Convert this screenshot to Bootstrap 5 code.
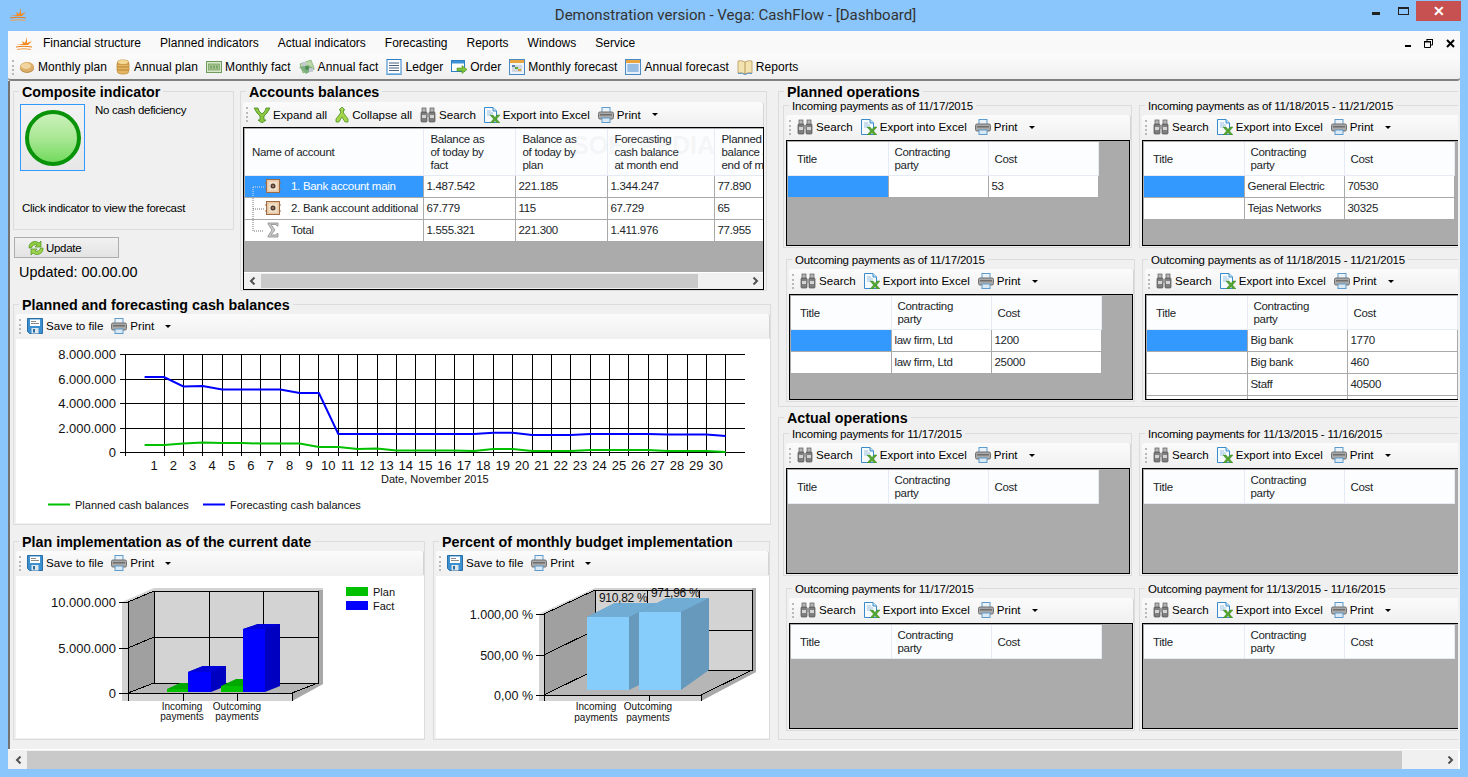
<!DOCTYPE html>
<html lang="en">
<head>
<meta charset="utf-8">
<title>Vega: CashFlow</title>
<link href="https://cdn.jsdelivr.net/npm/bootstrap@5.3.0/dist/css/bootstrap.min.css" rel="stylesheet">
<style>
html,body{margin:0;height:777px;overflow:hidden;background:#8ac5fb}
body{font:12px/14px "Liberation Sans",Arial,sans-serif;color:#000}
svg{display:block;flex:none}
.app{width:1468px;height:777px}
.titlebar{height:31px;position:relative;padding-left:10px}
.title-text{flex:1;text-align:center;font:15px/30px Roboto,sans-serif;color:#333;padding-left:72px}
.wc{display:flex;align-items:flex-start;height:21px;margin-right:7px}
.wc-min{width:8px;height:3px;background:#222;margin:12px 0 0 0}
.wc-max{width:11px;height:8px;border:1px solid #222;border-top-width:2px;margin:7px 7px 0 18px}
.wc-close{width:45px;height:20px;margin:1px 0 0 0;background:#c75050;color:#fff;text-align:center;font:bold 14px/20px "Liberation Sans",sans-serif}
.client{height:738px;margin:0 8px;background:#f0f0f0;display:flex;flex-direction:column}
.menubar{height:24px;background:#f9f9f9;padding-left:8px;gap:19px;font-size:12px;flex:none}
.menubar .logo{margin-right:-9px}
.menubar .mdi{margin-left:auto;gap:13px;padding-right:5px}
.mdi-min{width:6px;height:2px;background:#000;margin-top:6px}
.mainbar{height:26px;flex:none;background:linear-gradient(#fbfbfb,#efefef);border-bottom:2px solid #808080;padding-left:4px;border-radius:0 0 3px 3px;letter-spacing:.07px}
.grip{width:2px;height:15px;border-left:2px dotted #b9b9b9;margin-right:6px;flex:none}
.mainbar .grip{margin-right:5px}
.tool{display:flex;align-items:center;gap:3px;margin-right:8px;white-space:nowrap;flex:none}
.caret{width:0;height:0;border:3.5px solid transparent;border-top:3.5px solid #000;border-bottom:0;margin-left:1px;flex:none}
.workspace{height:668px;flex:none;border-left:2px solid #737373;padding-left:3px;margin-right:2px;overflow:hidden;position:relative}
.leftcol{width:758px;flex:none}
.rightcol{margin-left:7px;width:690px;flex:none}
.gb{border:1px solid #dcdcdc;flex:none}
.gb-t{width:fit-content;background:#f0f0f0;padding:0 3px;margin:-8px 0 0 5px;font:bold 14.3px/16px "Liberation Sans",sans-serif;white-space:nowrap}
.gs-t{width:fit-content;background:#f0f0f0;padding:0 3px;margin:-7px 0 0 5px;font-size:11.5px;line-height:14px;white-space:nowrap;letter-spacing:-.2px}
.tb{height:25px;background:linear-gradient(#fbfbfb,#f0f0f0);border-radius:3px 3px 0 0;padding-left:3px;border-right:1px solid #d4d4d4;flex:none;font-size:11.6px}
.comp{width:221px;height:139px;margin-top:10px}
.ind{width:65px;height:67px;padding:0;border:1px solid #3399ff;border-radius:0;background:linear-gradient(#f3f3f3,#e7e7e7);margin:4px 0 0 6px;display:flex;align-items:center;justify-content:center}
.upd{width:105px;height:21px;margin:7px 0 0 1px;padding:0 0 0 13px;border:1px solid #adadad;border-radius:0;background:linear-gradient(#f1f1f1,#e3e3e3);color:#000;font-size:11.5px;line-height:14px;letter-spacing:-.3px;display:flex;align-items:center;gap:2px}
.upd-t{font-size:14.4px;line-height:18px;margin:5px 0 0 6px}
.click{margin:30px 0 0 8px;white-space:nowrap;font-size:11.5px;letter-spacing:-.3px}
.nocash{margin-top:3px;margin-left:10px;white-space:nowrap;font-size:11.5px;letter-spacing:-.3px}
.acc{width:527px;height:200px;margin:10px 0 0 6px}
.acc .tb{margin:2px 0 0 2px;width:521px}
.acc-grid{margin-left:2px;width:521px;height:163px;border:1px solid #000;background:#ababab;display:flex;flex-direction:column;position:relative;overflow:hidden}
.acc-clip{height:144px;overflow:hidden;padding:1px 0 0 1px;flex:none}
.hs{height:17px;flex:none;background:#f0f0f0;border-top:1px solid #fff;display:flex;align-items:stretch;margin-top:auto}
.hs-a{width:17px;flex:none;display:flex;align-items:center;justify-content:center}
.hs-th{background:#c9c9c9;margin:1px 0}
.hs-th.th-acc{width:437px}
.hs-tr{flex:1}
.wm{position:absolute;left:328px;top:2px;font:bold 25px/30px "Liberation Sans",sans-serif;color:rgba(190,190,190,.12);pointer-events:none;white-space:nowrap}
table.dg{table-layout:fixed;border-collapse:collapse;margin:0;width:310px;font-size:11.5px;letter-spacing:-.3px;line-height:13px;--bs-table-bg:#fff}
table.dg.wideT{width:569px}
table.dg th,table.dg td{padding:0 0 0 3px;font-weight:400;vertical-align:middle;white-space:nowrap;overflow:hidden;border:1px solid #a9a9a9;height:22px}
table.dg th{background:#fcfdfe;border:1px solid #e6ebf3;height:33px;padding:2px 0 0 6px;white-space:nowrap}
table.dg th.t{padding-left:9px}
table.dg tr:first-child th{border-top:0}
table.dg tr:first-child th:first-child,table.dg td:first-child{border-left:0}
table.dg tr.h46 th{height:46px;padding-left:7px}
table.dg td.sel{background:#3399ff;color:#fff;--bs-table-bg:#3399ff;--bs-table-color:#fff}
.c-178{width:178px}.c-92{width:92px}.c-107{width:107px}.c-100{width:100px}.c-110{width:110px}
.tree{display:flex;align-items:center;height:21px;padding-left:7px}
.tree .lbl{margin-left:10px}
.chartbox{width:758px;height:221px;margin-top:13px}
.chartbox .tb,.c1 .tb,.c2 .tb{margin:1px 0 0 2px;height:24px}
.plot{background:#fff;margin:1px 0 0 2px}
.b1{width:412px;height:199px}
.b2{width:337px;height:199px;margin-left:8px}
.bottomrow{margin-top:16px}
.ops1{height:316px;margin-top:10px;border-right:0}
.ops2{height:323px;margin-top:10px;border-right:0}
.rw1{margin:5px 0 0 4px;gap:7px}
.rw2{margin:11px 0 0 7px;gap:7px}
.ops2 .rw1{margin-top:7px}
.ops2 .rw2{margin-top:12px;gap:4px}
.sub{width:349px;height:143px;flex:none}
.sub.wide{width:340px}
.sub .tb{margin:2px 0 0 2px;width:345px;padding-bottom:1px}
.sub.wide .tb{width:340px}
.grid{margin-left:2px;width:344px;height:106px;border:1px solid #000;background:#ababab;padding:1px;overflow:hidden}
.sub.wide .grid{width:330px;border-right:0}
.crisp{shape-rendering:crispEdges}
.chart-t{font-family:"Liberation Sans",sans-serif;font-size:13px;fill:#111}
.chart-p{font-family:"Liberation Sans",sans-serif;font-size:12.500px;fill:#111}
.chart-b{font-family:"Liberation Sans",sans-serif;font-size:12px;letter-spacing:-.3px;fill:#111}
.chart-s{font-family:"Liberation Sans",sans-serif;font-size:11px;fill:#111}
.chart-x{font-family:"Liberation Sans",sans-serif;font-size:10px;fill:#111;text-anchor:middle}
.bottomscroll{height:18px;flex:none;display:flex;margin:1px 0 1px 2px;background:#f0f0f0;border-right:2px solid #fff}
.bottomscroll .hs-th{width:1375px;margin:0}
.whiteline{height:1px;background:#fff;flex:none}
</style>
</head>
<body>
<svg width="0" height="0" class="position-absolute">
<defs>
<symbol id="sun" viewBox="0 0 17 13"><path d="M0 8L7 7L6 4L9 6L11 0L11 6L16 4L12 8Z" fill="#f58a1f"/><path d="M0 9.500Q8 8 16 9.500V10.500Q8 9 0 10.500Z" fill="#e97d14"/><path d="M1 12Q8 10.500 15 12V13Q8 11.500 1 13Z" fill="#f5a04a"/></symbol>
<symbol id="coin" viewBox="0 0 16 16"><ellipse cx="8" cy="9" rx="7" ry="5" fill="#b98a45"/><ellipse cx="8" cy="8" rx="7" ry="5" fill="#dcae69"/><ellipse cx="7" cy="7" rx="5" ry="3" fill="#f0d5a0"/></symbol>
<symbol id="coins" viewBox="0 0 16 16"><rect x="2" y="1" width="12" height="14" rx="4" fill="#e2b665" stroke="#c69442" stroke-width=".8"/><path d="M2 5H14M2 8H14M2 11H14" stroke="#b9822e" stroke-width="1"/><ellipse cx="8" cy="3" rx="5" ry="2" fill="#f4d995"/></symbol>
<symbol id="bill" viewBox="0 0 16 16"><rect x=".5" y="2.500" width="15" height="11" fill="#d6e8c8" stroke="#6f9a5d"/><rect x="2.500" y="5" width="11" height="6" fill="#a7c890" stroke="#6f9a5d" stroke-width=".7"/><path d="M5 6.500V9.500M8 6.500V9.500M11 6.500V9.500" stroke="#55804a"/></symbol>
<symbol id="bills" viewBox="0 0 16 16"><path d="M1 5L12 1L15 9L4 14Z" fill="#bcd8a8" stroke="#7ba76a" stroke-width=".7"/><path d="M0 8L9 6L16 10L7 15Z" fill="#7fb280"/><path d="M3 3H7V7H3ZM10 9H14V13H10Z" fill="#c4c8d0"/><circle cx="8" cy="9" r="2" fill="#4f8a55"/></symbol>
<symbol id="ledger" viewBox="0 0 16 16"><rect x="1" y=".5" width="14" height="15" fill="#fff" stroke="#2c7fc2"/><path d="M3 4H13M3 6.500H13M3 9H13M3 11.500H13" stroke="#47627e"/><rect x="1" y="14" width="14" height="1.500" fill="#8cc0e8"/></symbol>
<symbol id="order" viewBox="0 0 16 16"><rect x=".5" y="1.500" width="13" height="11" fill="#fff" stroke="#2c7fc2"/><rect x="1" y="2" width="12" height="2.500" fill="#3f91d5"/><path d="M6 9H11V6.500L16 10.500L11 14.500V12H6Z" fill="#7cc23e" stroke="#4c8f1d" stroke-width=".6"/></symbol>
<symbol id="mfc" viewBox="0 0 16 16"><rect x=".5" y=".5" width="15" height="15" fill="#eef3f8" stroke="#4a8ac4"/><rect x="1" y="1" width="14" height="3" fill="#e7a43f"/><rect x="3" y="6" width="10" height="7" fill="#cfd8e2"/><rect x="6" y="8" width="3" height="2" fill="#5aa83a"/><rect x="9" y="10" width="3" height="2" fill="#d9a33b"/><rect x="3" y="6" width="3" height="2" fill="#5a7fa8"/></symbol>
<symbol id="afc" viewBox="0 0 16 16"><rect x=".5" y=".5" width="15" height="15" fill="#e8f1fa" stroke="#4a8ac4"/><rect x="1" y="1" width="14" height="3" fill="#e7a43f"/><path d="M2 6H14M2 8H14M2 10H14M2 12H14M4 5V13M6 5V13M8 5V13M10 5V13M12 5V13" stroke="#6aa2d8" stroke-width=".8"/></symbol>
<symbol id="book" viewBox="0 0 16 16"><path d="M8 3Q5 1 1 2V14Q5 13 8 15Q11 13 15 14V2Q11 1 8 3Z" fill="#f3e3b0" stroke="#b6975a" stroke-width=".8"/><path d="M8 3V15" stroke="#b6975a"/><path d="M1 14.500Q5 13.500 8 15.500Q11 13.500 15 14.500" stroke="#5b93c7" fill="none"/></symbol>
<symbol id="expand" viewBox="0 0 16 16"><path d="M0 1L4 1L5 4L8 7L11 4L12 1L16 1L13 6L10 9V13L12 13L8 16L4 13L6 13V9L3 6Z" fill="#8ec63f" stroke="#3d8a1f" stroke-width=".8"/></symbol>
<symbol id="collapse" viewBox="0 0 14 16"><path d="M7 0L10 3H8.500V6L13 12V15H10L7 10L4 15H1V12L5.500 6V3H4Z" fill="#a6d34c" stroke="#4d9423" stroke-width=".8"/></symbol>
<symbol id="search" viewBox="0 0 16 16"><rect x="1" y="5" width="6" height="10" rx="1" fill="#7f7f7f" stroke="#4e4e4e" stroke-width=".7"/><rect x="9" y="5" width="6" height="10" rx="1" fill="#7f7f7f" stroke="#4e4e4e" stroke-width=".7"/><rect x="2" y="1" width="4" height="4" fill="#b5b5b5" stroke="#5c5c5c" stroke-width=".7"/><rect x="10" y="1" width="4" height="4" fill="#b5b5b5" stroke="#5c5c5c" stroke-width=".7"/><rect x="6.500" y="6" width="3" height="4" fill="#999"/><rect x="2" y="8" width="4" height="3" fill="#d4d4d4"/><rect x="10" y="8" width="4" height="3" fill="#d4d4d4"/></symbol>
<symbol id="excel" viewBox="0 0 16 16"><path d="M.5 .5H9L12.500 4V15.500H.5Z" fill="#f5fbff" stroke="#3a8bc9"/><path d="M9 .5V4H12.500" fill="#cfe6f7" stroke="#3a8bc9"/><path d="M3 4H7M3 6H9M3 8H7" stroke="#9dc3de"/><path d="M6 8H9L11 10.500L13 8H16L12.500 12L16 16H13L11 13.500L9 16H6L9.500 12Z" fill="#55a630" stroke="#2f7a1c" stroke-width=".4"/></symbol>
<symbol id="print" viewBox="0 0 16 16"><rect x="4" y=".5" width="8" height="5" fill="#eaf2fa" stroke="#5f9bcc"/><rect x=".5" y="5" width="15" height="7" rx="1.500" fill="#a9a9a9" stroke="#707070"/><rect x="2" y="7" width="12" height="1.500" fill="#6e6e6e"/><rect x="4" y="11" width="8" height="4.500" fill="#dbe9f5" stroke="#5f9bcc"/></symbol>
<symbol id="save" viewBox="0 0 16 16"><path d="M.5 .5H15.500V15.500H2.500L.5 13.500Z" fill="#3d90d0" stroke="#2a6ea6"/><rect x="3" y="1.500" width="10" height="6.500" fill="#fff"/><path d="M4 3.500H9M4 5.500H12" stroke="#8a8a8a"/><rect x="4.500" y="10" width="7" height="5.500" fill="#dfe6ec"/><rect x="6" y="11" width="2" height="3.500" fill="#2a6ea6"/></symbol>
<symbol id="update" viewBox="0 0 16 16"><path d="M1 8A6 6 0 0 1 11 3L13 1V7H7L9 5A4 4 0 0 0 3.500 8Z" fill="#8ecb3e" stroke="#4c9423" stroke-width=".7"/><path d="M15 8A6 6 0 0 1 5 13L3 15V9H9L7 11A4 4 0 0 0 12.500 8Z" fill="#9ed24a" stroke="#4c9423" stroke-width=".7"/></symbol>
<symbol id="acct" viewBox="0 0 16 16"><rect x="1.500" y="1.500" width="13" height="13" fill="#e8c7a4" stroke="#a06c45"/><rect x="3.500" y="3.500" width="9" height="9" fill="#f2dfc8"/><circle cx="8" cy="8" r="2.500" fill="#4f4039"/><circle cx="8" cy="8" r="1" fill="#b0805a"/><path d="M0 5H2M0 11H2M14 5H16M14 11H16" stroke="#a06c45"/></symbol>
<symbol id="sigma" viewBox="0 0 16 16"><path d="M3 1H13V4H12L11 2.500H6L10 8L6 13H11L12 11.500H13V15H3V14L7 8L3 2Z" fill="#c9c9c9" stroke="#8b8b8b" stroke-width=".8"/></symbol>
<symbol id="la" viewBox="0 0 8 8"><path d="M5.500 .5L2 4L5.500 7.500" fill="none" stroke="#505050" stroke-width="2"/></symbol>
<symbol id="ra" viewBox="0 0 8 8"><path d="M2.500 .5L6 4L2.500 7.500" fill="none" stroke="#505050" stroke-width="2"/></symbol>
</defs>
</svg>
<div class="app">
  <div class="titlebar d-flex align-items-start">
    <svg width="17" height="13" class="mt-2"><use href="#sun"/></svg>
    <div class="title-text">Demonstration version - Vega: CashFlow - [Dashboard]</div>
    <div class="wc">
      <span class="wc-min"></span><span class="wc-max"></span><span class="wc-close">✕</span>
    </div>
  </div>
  <div class="client">
    <nav class="menubar d-flex align-items-center">
      <svg class="logo" width="17" height="13"><use href="#sun"/></svg>
      <span>Financial structure</span><span>Planned indicators</span><span>Actual indicators</span><span>Forecasting</span><span>Reports</span><span>Windows</span><span>Service</span>
      <span class="mdi d-flex align-items-center">
        <span class="mdi-min"></span>
        <svg width="9" height="9" viewBox="0 0 9 9"><path d="M.5 3H6.500V8.500H.5ZM3 3V.5H8.500V6H6.500" fill="none" stroke="#000"/><path d="M0 2.500H7M2.500 .5H9" stroke="#000"/></svg>
        <svg width="9" height="9" viewBox="0 0 9 9"><path d="M1 1L8 8M8 1L1 8" stroke="#000" stroke-width="2"/></svg>
      </span>
    </nav>
    <div class="mainbar d-flex align-items-center">
      <span class="grip"></span>
      <span class="tool"><svg width="16" height="16"><use href="#coin"/></svg>Monthly plan</span>
      <span class="tool"><svg width="16" height="16"><use href="#coins"/></svg>Annual plan</span>
      <span class="tool"><svg width="16" height="16"><use href="#bill"/></svg>Monthly fact</span>
      <span class="tool"><svg width="16" height="16"><use href="#bills"/></svg>Annual fact</span>
      <span class="tool"><svg width="16" height="16"><use href="#ledger"/></svg>Ledger</span>
      <span class="tool"><svg width="16" height="16"><use href="#order"/></svg>Order</span>
      <span class="tool"><svg width="16" height="16"><use href="#mfc"/></svg>Monthly forecast</span>
      <span class="tool"><svg width="16" height="16"><use href="#afc"/></svg>Annual forecast</span>
      <span class="tool"><svg width="16" height="16"><use href="#book"/></svg>Reports</span>
    </div>
    <div class="workspace d-flex">
      <div class="leftcol">
        <div class="d-flex">
          <div>
            <div class="gb comp">
              <div class="gb-t">Composite indicator</div>
              <div class="d-flex align-items-start">
                <button class="ind" type="button" aria-label="Composite indicator">
                  <svg width="58" height="58" viewBox="0 0 58 58"><defs><linearGradient id="g" x1="0" y1="0" x2="0" y2="1"><stop offset="0" stop-color="#cdf2be"/><stop offset=".5" stop-color="#a9e794"/><stop offset="1" stop-color="#6fd95a"/></linearGradient></defs><circle cx="29" cy="29" r="26" fill="url(#g)" stroke="#089308" stroke-width="4"/></svg>
                </button>
                <div class="nocash">No cash deficiency</div>
              </div>
              <div class="click">Click indicator to view the forecast</div>
            </div>
            <button class="btn upd" type="button"><svg width="16" height="16"><use href="#update"/></svg>Update</button>
            <div class="upd-t">Updated: 00.00.00</div>
          </div>
          <div class="gb acc">
            <div class="gb-t">Accounts balances</div>
            <div class="tb d-flex align-items-center">
              <span class="grip"></span>
              <span class="tool"><svg width="16" height="16"><use href="#expand"/></svg>Expand all</span>
              <span class="tool"><svg width="14" height="16"><use href="#collapse"/></svg>Collapse all</span>
              <span class="tool"><svg width="16" height="16"><use href="#search"/></svg>Search</span>
              <span class="tool"><svg width="16" height="16"><use href="#excel"/></svg>Export into Excel</span>
              <span class="tool"><svg width="16" height="16"><use href="#print"/></svg>Print<span class="caret ms-2"></span></span>
            </div>
            <div class="acc-grid">
              <div class="acc-clip">
                <table class="table dg wideT">
                  <colgroup><col class="c-178"><col class="c-92"><col class="c-92"><col class="c-107"><col class="c-100"></colgroup>
                  <tr class="h46"><th class="t">Name of account</th><th>Balance as<br>of today by<br>fact</th><th>Balance as<br>of today by<br>plan</th><th>Forecasting<br>cash balance<br>at month end</th><th>Planned<br>balance at<br>end of month</th></tr>
                  <tr><td class="sel p-0"><div class="tree"><svg width="29" height="21" viewBox="0 0 29 21"><path d="M1 11H12M1 11V21" stroke="#ddd" stroke-dasharray="1 1" fill="none"/><use href="#acct" x="13" y="2" width="16" height="16"/></svg><span class="lbl">1. Bank account main</span></div></td><td>1.487.542</td><td>221.185</td><td>1.344.247</td><td>77.890</td></tr>
                  <tr><td class="p-0"><div class="tree"><svg width="29" height="21" viewBox="0 0 29 21"><path d="M1 0V21M1 11H12" stroke="#777" stroke-dasharray="1 1" fill="none"/><use href="#acct" x="13" y="2" width="16" height="16"/></svg><span class="lbl">2. Bank account additional</span></div></td><td>67.779</td><td>115</td><td>67.729</td><td>65</td></tr>
                  <tr><td class="p-0"><div class="tree"><svg width="29" height="21" viewBox="0 0 29 21"><path d="M1 0V11H12" stroke="#777" stroke-dasharray="1 1" fill="none"/><use href="#sigma" x="13" y="2" width="16" height="16"/></svg><span class="lbl">Total</span></div></td><td>1.555.321</td><td>221.300</td><td>1.411.976</td><td>77.955</td></tr>
                </table>
              </div>
              <div class="hs">
                <span class="hs-a"><svg width="8" height="8"><use href="#la"/></svg></span>
                <span class="hs-th th-acc"></span>
                <span class="hs-tr"></span>
                <span class="hs-a"><svg width="8" height="8"><use href="#ra"/></svg></span>
              </div>
              <div class="wm">SOFTPEDIA</div>
            </div>
          </div>
        </div>
        <div class="gb chartbox">
          <div class="gb-t">Planned and forecasting cash balances</div>
          <div class="tb d-flex align-items-center">
            <span class="grip"></span>
            <span class="tool"><svg width="16" height="16"><use href="#save"/></svg>Save to file</span>
            <span class="tool"><svg width="16" height="16"><use href="#print"/></svg>Print<span class="caret ms-2"></span></span>
          </div>
          <div class="plot">
            <svg width="752" height="184" viewBox="16 339 752 184">
              <g class="crisp" stroke="#000" stroke-width="1">
                <path d="M120 354.500H745M120 379H745M120 403.500H745M120 428H745M120 452.500H745"/>
                <path d="M125 354V456M164 354V456M183.300 354V456M202.700 354V456M222.100 354V456M241.500 354V456M260.800 354V456M280.200 354V456M299.600 354V456M318.900 354V456M338.300 354V456M357.700 354V456M377 354V456M396.400 354V456M415.800 354V456M435.200 354V456M454.500 354V456M473.900 354V456M493.300 354V456M512.600 354V456M532 354V456M551.400 354V456M570.700 354V456M590.100 354V456M609.500 354V456M628.900 354V456M648.200 354V456M667.600 354V456M687 354V456M706.300 354V456M725.700 354V456"/>
              </g>
              <polyline fill="none" stroke="#00c000" stroke-width="2" points="144.600,445 164,445 183.300,443.500 202.700,442.500 222.100,443 241.500,443 260.800,443.500 280.200,443.500 299.600,443.500 318.900,447 338.300,447 357.700,449 377,448.500 396.400,450.500 415.800,450.500 435.200,450.500 454.500,450.500 473.900,451 493.300,449 512.600,449 532,451 551.400,451 570.700,451 590.100,450 609.500,450 628.900,450 648.200,450 667.600,451 687,451 706.300,451 725.700,452"/>
              <polyline fill="none" stroke="#0000ff" stroke-width="2" points="144.600,377 164,377 183.300,386.500 202.700,386 222.100,389.500 241.500,389.500 260.800,389.500 280.200,389.500 299.600,393 318.900,393 338.300,434 357.700,434 377,434 396.400,434 415.800,434 435.200,434 454.500,434 473.900,434 493.300,432.700 512.600,432.700 532,435 551.400,435 570.700,435 590.100,434 609.500,434 628.900,434 648.200,434 667.600,434.500 687,434.500 706.300,434.500 725.700,436"/>
              <g class="chart-t" text-anchor="end">
                <text x="116" y="359">8.000.000</text><text x="116" y="384">6.000.000</text><text x="116" y="408">4.000.000</text><text x="116" y="433">2.000.000</text><text x="116" y="457">0</text>
              </g>
              <g class="chart-t" text-anchor="middle">
                <text x="154" y="470">1</text><text x="173.400" y="470">2</text><text x="192.700" y="470">3</text><text x="212.100" y="470">4</text><text x="231.500" y="470">5</text><text x="250.800" y="470">6</text><text x="270.200" y="470">7</text><text x="289.600" y="470">8</text><text x="309" y="470">9</text><text x="328.300" y="470">10</text><text x="347.700" y="470">11</text><text x="367.100" y="470">12</text><text x="386.400" y="470">13</text><text x="405.800" y="470">14</text><text x="425.200" y="470">15</text><text x="444.500" y="470">16</text><text x="463.900" y="470">17</text><text x="483.300" y="470">18</text><text x="502.700" y="470">19</text><text x="522" y="470">20</text><text x="541.400" y="470">21</text><text x="560.800" y="470">22</text><text x="580.100" y="470">23</text><text x="599.500" y="470">24</text><text x="618.900" y="470">25</text><text x="638.200" y="470">26</text><text x="657.600" y="470">27</text><text x="677" y="470">28</text><text x="696.300" y="470">29</text><text x="715.700" y="470">30</text>
              </g>
              <text class="chart-s" x="381" y="483">Date, November 2015</text>
              <path d="M48 504.500H70" stroke="#00c000" stroke-width="2"/>
              <text class="chart-s" x="75" y="509">Planned cash balances</text>
              <path d="M203 504.500H225" stroke="#0000ff" stroke-width="2"/>
              <text class="chart-s" x="230" y="509">Forecasting cash balances</text>
            </svg>
          </div>
        </div>
        <div class="d-flex bottomrow">
          <div class="gb b1 c1">
            <div class="gb-t">Plan implementation as of the current date</div>
            <div class="tb d-flex align-items-center">
              <span class="grip"></span>
              <span class="tool"><svg width="16" height="16"><use href="#save"/></svg>Save to file</span>
              <span class="tool"><svg width="16" height="16"><use href="#print"/></svg>Print<span class="caret ms-2"></span></span>
            </div>
            <div class="plot">
              <svg width="407" height="162" viewBox="16 576 407 162">
                <path d="M122 701V602L154 588H323V684L292 701Z" fill="#d3d3d3"/>
                <path d="M292 693V701L323 684V590H318V683Z" fill="#a9a9a9"/>
                <path d="M154 591H318V683H154Z" fill="#d3d3d3"/>
                <path d="M128 602L154 591V683L128 693Z" fill="#a0a0a0"/>
                <path d="M128 693L154 683H318L292 693Z" fill="#b6b6b6"/>
                <g class="crisp" stroke="#000" stroke-width="1" fill="none">
                  <path d="M154 591H318V683H154ZM154 637H318M209 591V683M263 591V683"/>
                  <path d="M128 602V701M128 602L154 591M128 648L154 637M128 693L154 683M292 693L318 683M119 602H128M119 648H128M119 693H292M183 693V701M237 693V701M292 693V701"/>
                </g>
                <path d="M167 692V689L180 683H196V692Z" fill="#00a800"/><path d="M167 689H188V692H167Z" fill="#00c000"/>
                <path d="M188 672L203 666H226V686L211 692V672Z" fill="#0000c0"/><path d="M188 672L203 666H226L211 672Z" fill="#0000d8"/><rect x="188" y="672" width="23" height="20" fill="#0000ff"/>
                <path d="M221 686L236 679H250V692H221Z" fill="#00a800"/><rect x="221" y="686" width="22" height="6" fill="#00c000"/>
                <path d="M243 629L258 624H280V686L265 692V629Z" fill="#0000c0"/><path d="M243 629L258 624H280L265 629Z" fill="#0000d8"/><rect x="243" y="629" width="22" height="63" fill="#0000ff"/>
                <g class="chart-t" text-anchor="end"><text x="116" y="607">10.000.000</text><text x="116" y="653">5.000.000</text><text x="116" y="698">0</text></g>
                <g class="chart-x"><text x="182" y="710">Incoming</text><text x="182" y="720">payments</text><text x="237" y="710">Outcoming</text><text x="237" y="720">payments</text></g>
                <rect x="346" y="587" width="22" height="9" fill="#00c000"/><rect x="346" y="601" width="22" height="9" fill="#0000ff"/>
                <text class="chart-s" x="373" y="596">Plan</text><text class="chart-s" x="373" y="610">Fact</text>
              </svg>
            </div>
          </div>
          <div class="gb b2 c2">
            <div class="gb-t">Percent of monthly budget implementation</div>
            <div class="tb d-flex align-items-center">
              <span class="grip"></span>
              <span class="tool"><svg width="16" height="16"><use href="#save"/></svg>Save to file</span>
              <span class="tool"><svg width="16" height="16"><use href="#print"/></svg>Print<span class="caret ms-2"></span></span>
            </div>
            <div class="plot">
              <svg width="333" height="162" viewBox="435 576 333 162">
                <path d="M538 701V614L594 588H755V672L700 701Z" fill="#d3d3d3"/>
                <path d="M700 695V701L755 672V588H751V670Z" fill="#a9a9a9"/>
                <path d="M543 614L594 590V670L543 695Z" fill="#a0a0a0"/>
                <path d="M594 590H751V670H594Z" fill="#d3d3d3"/>
                <path d="M543 695L594 670H751L700 695Z" fill="#b6b6b6"/>
                <g class="crisp" stroke="#000" stroke-width="1" fill="none">
                  <path d="M594 590H751V670H594ZM594 630H751M646 590V670M698 590V670"/>
                  <path d="M543 614V701M543 614L594 590M543 655L594 630M543 695L594 670M700 695L751 670M535 614H543M535 655H543M535 695H700M648 695V701M700 695V701"/>
                </g>
                <path d="M586 617L614 603H656V676L628 690V617Z" fill="#6699bb"/>
                <path d="M586 617L614 603H656L628 617Z" fill="#70acd4"/>
                <rect x="586" y="617" width="42" height="73" fill="#87cdfb"/>
                <text class="chart-b" x="598" y="602">910,82 %</text>
                <path d="M638 612L666 598H708V670L680 690V612Z" fill="#6699bb"/>
                <path d="M638 612L666 598H708L680 612Z" fill="#70acd4"/>
                <rect x="638" y="612" width="42" height="78" fill="#87cdfb"/>
                <text class="chart-b" x="650" y="597">971,96 %</text>
                <g class="chart-p" text-anchor="end"><text x="532" y="619">1.000,00 %</text><text x="532" y="660">500,00 %</text><text x="532" y="700">0,00 %</text></g>
                <g class="chart-x"><text x="595" y="710">Incoming</text><text x="595" y="721">payments</text><text x="647" y="710">Outcoming</text><text x="647" y="721">payments</text></g>
              </svg>
            </div>
          </div>
        </div>
      </div>
      <div class="rightcol">
        <div class="gb ops1">
          <div class="gb-t">Planned operations</div>
          <div class="d-flex rw1">
            <div class="gb sub">
              <div class="gs-t">Incoming payments as of 11/17/2015</div>
              <div class="tb d-flex align-items-center"><span class="grip"></span><span class="tool"><svg width="16" height="16"><use href="#search"/></svg>Search</span><span class="tool"><svg width="16" height="16"><use href="#excel"/></svg>Export into Excel</span><span class="tool"><svg width="16" height="16"><use href="#print"/></svg>Print<span class="caret ms-2"></span></span></div>
              <div class="grid"><table class="table dg"><colgroup><col class="c-100"><col class="c-100"><col class="c-110"></colgroup><tr><th class="t">Title</th><th>Contracting<br>party</th><th>Cost</th></tr><tr><td class="sel"></td><td></td><td>53</td></tr></table></div>
            </div>
            <div class="gb sub wide">
              <div class="gs-t">Incoming payments as of 11/18/2015 - 11/21/2015</div>
              <div class="tb d-flex align-items-center"><span class="grip"></span><span class="tool"><svg width="16" height="16"><use href="#search"/></svg>Search</span><span class="tool"><svg width="16" height="16"><use href="#excel"/></svg>Export into Excel</span><span class="tool"><svg width="16" height="16"><use href="#print"/></svg>Print<span class="caret ms-2"></span></span></div>
              <div class="grid"><table class="table dg"><colgroup><col class="c-100"><col class="c-100"><col class="c-110"></colgroup><tr><th class="t">Title</th><th>Contracting<br>party</th><th>Cost</th></tr><tr><td class="sel"></td><td>General Electric</td><td>70530</td></tr><tr><td></td><td>Tejas Networks</td><td>30325</td></tr></table></div>
            </div>
          </div>
          <div class="d-flex rw2">
            <div class="gb sub">
              <div class="gs-t">Outcoming payments as of 11/17/2015</div>
              <div class="tb d-flex align-items-center"><span class="grip"></span><span class="tool"><svg width="16" height="16"><use href="#search"/></svg>Search</span><span class="tool"><svg width="16" height="16"><use href="#excel"/></svg>Export into Excel</span><span class="tool"><svg width="16" height="16"><use href="#print"/></svg>Print<span class="caret ms-2"></span></span></div>
              <div class="grid"><table class="table dg"><colgroup><col class="c-100"><col class="c-100"><col class="c-110"></colgroup><tr><th class="t">Title</th><th>Contracting<br>party</th><th>Cost</th></tr><tr><td class="sel"></td><td>law firm, Ltd</td><td>1200</td></tr><tr><td></td><td>law firm, Ltd</td><td>25000</td></tr></table></div>
            </div>
            <div class="gb sub wide">
              <div class="gs-t">Outcoming payments as of 11/18/2015 - 11/21/2015</div>
              <div class="tb d-flex align-items-center"><span class="grip"></span><span class="tool"><svg width="16" height="16"><use href="#search"/></svg>Search</span><span class="tool"><svg width="16" height="16"><use href="#excel"/></svg>Export into Excel</span><span class="tool"><svg width="16" height="16"><use href="#print"/></svg>Print<span class="caret ms-2"></span></span></div>
              <div class="grid"><table class="table dg"><colgroup><col class="c-100"><col class="c-100"><col class="c-110"></colgroup><tr><th class="t">Title</th><th>Contracting<br>party</th><th>Cost</th></tr><tr><td class="sel"></td><td>Big bank</td><td>1770</td></tr><tr><td></td><td>Big bank</td><td>460</td></tr><tr><td></td><td>Staff</td><td>40500</td></tr><tr><td></td><td></td><td></td></tr></table></div>
            </div>
          </div>
        </div>
        <div class="gb ops2">
          <div class="gb-t">Actual operations</div>
          <div class="d-flex rw1">
            <div class="gb sub">
              <div class="gs-t">Incoming payments for 11/17/2015</div>
              <div class="tb d-flex align-items-center"><span class="grip"></span><span class="tool"><svg width="16" height="16"><use href="#search"/></svg>Search</span><span class="tool"><svg width="16" height="16"><use href="#excel"/></svg>Export into Excel</span><span class="tool"><svg width="16" height="16"><use href="#print"/></svg>Print<span class="caret ms-2"></span></span></div>
              <div class="grid"><table class="table dg"><colgroup><col class="c-100"><col class="c-100"><col class="c-110"></colgroup><tr><th class="t">Title</th><th>Contracting<br>party</th><th>Cost</th></tr></table></div>
            </div>
            <div class="gb sub wide">
              <div class="gs-t">Incoming payments for 11/13/2015 - 11/16/2015</div>
              <div class="tb d-flex align-items-center"><span class="grip"></span><span class="tool"><svg width="16" height="16"><use href="#search"/></svg>Search</span><span class="tool"><svg width="16" height="16"><use href="#excel"/></svg>Export into Excel</span><span class="tool"><svg width="16" height="16"><use href="#print"/></svg>Print<span class="caret ms-2"></span></span></div>
              <div class="grid"><table class="table dg"><colgroup><col class="c-100"><col class="c-100"><col class="c-110"></colgroup><tr><th class="t">Title</th><th>Contracting<br>party</th><th>Cost</th></tr></table></div>
            </div>
          </div>
          <div class="d-flex rw2">
            <div class="gb sub">
              <div class="gs-t">Outcoming payments for 11/17/2015</div>
              <div class="tb d-flex align-items-center"><span class="grip"></span><span class="tool"><svg width="16" height="16"><use href="#search"/></svg>Search</span><span class="tool"><svg width="16" height="16"><use href="#excel"/></svg>Export into Excel</span><span class="tool"><svg width="16" height="16"><use href="#print"/></svg>Print<span class="caret ms-2"></span></span></div>
              <div class="grid"><table class="table dg"><colgroup><col class="c-100"><col class="c-100"><col class="c-110"></colgroup><tr><th class="t">Title</th><th>Contracting<br>party</th><th>Cost</th></tr></table></div>
            </div>
            <div class="gb sub wide">
              <div class="gs-t">Outcoming payment for 11/13/2015 - 11/16/2015</div>
              <div class="tb d-flex align-items-center"><span class="grip"></span><span class="tool"><svg width="16" height="16"><use href="#search"/></svg>Search</span><span class="tool"><svg width="16" height="16"><use href="#excel"/></svg>Export into Excel</span><span class="tool"><svg width="16" height="16"><use href="#print"/></svg>Print<span class="caret ms-2"></span></span></div>
              <div class="grid"><table class="table dg"><colgroup><col class="c-100"><col class="c-100"><col class="c-110"></colgroup><tr><th class="t">Title</th><th>Contracting<br>party</th><th>Cost</th></tr></table></div>
            </div>
          </div>
        </div>
      </div>
    </div>
    <div class="whiteline"></div>
    <div class="bottomscroll">
      <span class="hs-a"><svg width="8" height="8"><use href="#la"/></svg></span>
      <span class="hs-th"></span>
      <span class="hs-tr"></span>
      <span class="hs-a"><svg width="8" height="8"><use href="#ra"/></svg></span>
    </div>
  </div>
</div>
<script src="https://cdn.jsdelivr.net/npm/bootstrap@5.3.0/dist/js/bootstrap.bundle.min.js"></script>
</body>
</html>
